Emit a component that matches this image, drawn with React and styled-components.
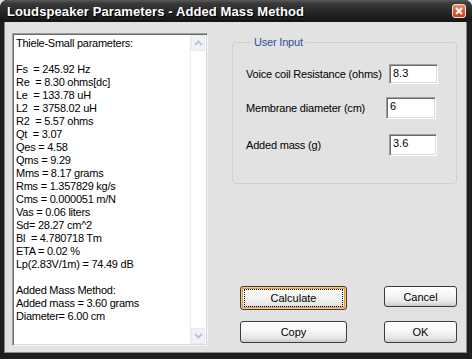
import React from "react";
import styled, { createGlobalStyle } from "styled-components";

const Global = createGlobalStyle`
  html, body { margin: 0; padding: 0; background: #e2e2e2; }
  body { width: 472px; height: 359px; overflow: hidden; font-family: "Liberation Sans", Arial, sans-serif; }
`;

const Window = styled.div`
  width: 472px;
  height: 359px;
  box-sizing: border-box;
  background: #1e1e1e;
  border-radius: 7px 7px 0 0;
  display: flex;
  flex-direction: column;
  overflow: hidden;
`;

const TitleBar = styled.div`
  height: 22px;
  flex: none;
  display: flex;
  align-items: center;
  justify-content: space-between;
  padding: 0 6px 0 7px;
  background: linear-gradient(#5a5a5a 0%, #3a3a3a 15%, #262626 55%, #151515 100%);
  border-radius: 7px 7px 0 0;
`;

const Title = styled.span`
  color: #fff;
  font-family: "Liberation Sans", Arial, sans-serif;
  font-weight: bold;
  font-size: 13px;
  letter-spacing: 0.1px;
  text-shadow: 1px 1px 0 #000;
  margin-top: 1px;
`;

const CloseBtn = styled.div`
  width: 14px;
  height: 14px;
  box-sizing: border-box;
  border: 1px solid #f5e6dc;
  border-radius: 3px;
  background: linear-gradient(#f08a64, #e0502c 60%, #c8401e);
  display: flex;
  align-items: center;
  justify-content: center;
`;

const Client = styled.div`
  flex: 1;
  margin: 0 5px 6px 4px;
  background: #e2e2e2;
  box-shadow: inset 1px 0 0 #8a8a8a, inset -1px 0 0 #8a8a8a, inset 0 -1px 0 #8a8a8a;
  display: flex;
  padding: 11px 0 0 8px;
`;

const ListBox = styled.div`
  width: 196px;
  height: 313px;
  box-sizing: border-box;
  background: #fff;
  border-top: 1px solid #a0a0a0;
  border-left: 1px solid #a0a0a0;
  border-right: 1px solid #f4f4f4;
  border-bottom: 1px solid #f4f4f4;
  box-shadow: inset 1px 1px 0 #6a6a6a, inset -1px -1px 0 #d8d8d8;
  display: flex;
  flex: none;
`;

const ListText = styled.pre`
  flex: 1;
  margin: 0;
  padding: 3px 0 0 3px;
  font-family: "Liberation Sans", Arial, sans-serif;
  font-size: 11px;
  letter-spacing: -0.25px;
  line-height: 13px;
  color: #000;
  white-space: pre;
  overflow: hidden;
`;

const ScrollBar = styled.div`
  width: 15px;
  margin: 1px 1px 1px 0;
  display: flex;
  flex-direction: column;
  justify-content: space-between;
  background: #fff;
  border-left: 1px solid #ececec;
`;

const ArrowBtn = styled.div`
  width: 14px;
  height: 16px;
  box-sizing: border-box;
  border: 1px solid #e6e9f0;
  border-radius: 2px;
  background: #f1f2f6;
  display: flex;
  align-items: center;
  justify-content: center;
`;

const RightCol = styled.div`
  margin-left: 24px;
  width: 225px;
  display: flex;
  flex-direction: column;
`;

const GroupBox = styled.fieldset`
  margin: 3px 0 0 0;
  padding: 12px 0 0 13px;
  height: 148px;
  border: 1px solid #cfcfcf;
  border-radius: 4px;
  min-width: 0;
  box-sizing: border-box;
`;

const Legend = styled.legend`
  padding: 0 2px;
  margin-left: 6px;
  color: #2f4f9e;
  font-size: 11px;
  letter-spacing: -0.2px;
`;

const Field = styled.div`
  display: flex;
  align-items: center;
  height: 22px;
  margin-top: ${(p) => p.$gap}px;
`;

const Label = styled.span`
  font-size: 11px;
  letter-spacing: -0.2px;
  color: #000;
  flex: 1;
`;

const Input = styled.div`
  width: ${(p) => p.$w}px;
  height: ${(p) => p.$h}px;
  margin-right: ${(p) => p.$mr}px;
  box-sizing: border-box;
  background: #fff;
  border-top: 1px solid #a0a0a0;
  border-left: 1px solid #a0a0a0;
  border-right: 1px solid #fff;
  border-bottom: 1px solid #fff;
  box-shadow: inset 1px 1px 0 #6a6a6a, inset -1px -1px 0 #dcdcdc;
  font-size: 11px;
  padding: 2px 0 0 3px;
  color: #000;
`;

const ButtonGrid = styled.div`
  margin-top: auto;
  margin-bottom: 10px;
  padding-left: 8px;
  display: grid;
  grid-template-columns: 107px 73px;
  column-gap: 37px;
  row-gap: 11px;
  align-items: start;
`;

const Button = styled.div`
  height: ${(p) => p.$h}px;
  box-sizing: border-box;
  border: 1px solid #3c3c3c;
  border-radius: 3px;
  background: linear-gradient(#ffffff 0%, #f6f6f6 45%, #e6e6e6 80%, #c9c9c9 100%);
  display: flex;
  align-items: center;
  justify-content: center;
  font-size: 11px;
  color: #000;
  box-shadow: ${(p) => (p.$default ? "inset 0 0 0 1px #f8c878, inset 0 0 0 2px #e89a3c" : "none")};
`;

const FocusText = styled.span`
  outline: 1px dotted #000;
  outline-offset: 0;
  padding: 2px 0;
  width: 97px;
  text-align: center;
  box-sizing: border-box;
`;

const text = `Thiele-Small parameters:

Fs  = 245.92 Hz
Re  = 8.30 ohms[dc]
Le  = 133.78 uH
L2  = 3758.02 uH
R2  = 5.57 ohms
Qt  = 3.07
Qes = 4.58
Qms = 9.29
Mms = 8.17 grams
Rms = 1.357829 kg/s
Cms = 0.000051 m/N
Vas = 0.06 liters
Sd= 28.27 cm^2
Bl  = 4.780718 Tm
ETA = 0.02 %
Lp(2.83V/1m) = 74.49 dB

Added Mass Method:
Added mass = 3.60 grams
Diameter= 6.00 cm`;

const Chevron = ({ up }) => (
  <svg width="9" height="6" viewBox="0 0 9 6">
    <path
      d={up ? "M1 5 L4.5 1.5 L8 5" : "M1 1 L4.5 4.5 L8 1"}
      fill="none"
      stroke="#b4c6e6"
      strokeWidth="2"
    />
  </svg>
);

export default function App() {
  return (
    <>
      <Global />
      <Window>
        <TitleBar>
          <Title>Loudspeaker Parameters - Added Mass Method</Title>
          <CloseBtn>
            <svg width="8" height="8" viewBox="0 0 8 8">
              <path d="M1 1 L7 7 M7 1 L1 7" stroke="#fff" strokeWidth="2" />
            </svg>
          </CloseBtn>
        </TitleBar>
        <Client>
          <ListBox>
            <ListText>{text}</ListText>
            <ScrollBar>
              <ArrowBtn>
                <Chevron up />
              </ArrowBtn>
              <ArrowBtn>
                <Chevron />
              </ArrowBtn>
            </ScrollBar>
          </ListBox>
          <RightCol>
            <GroupBox>
              <Legend>User Input</Legend>
              <Field $gap={3}>
                <Label>Voice coil Resistance (ohms)</Label>
                <Input $w={49} $h={20} $mr={18}>8.3</Input>
              </Field>
              <Field $gap={12}>
                <Label>Membrane diameter (cm)</Label>
                <Input $w={50} $h={22} $mr={20}>6</Input>
              </Field>
              <Field $gap={15}>
                <Label>Added mass (g)</Label>
                <Input $w={48} $h={22} $mr={19}>3.6</Input>
              </Field>
            </GroupBox>
            <ButtonGrid>
              <Button $h={24} $default>
                <FocusText>Calculate</FocusText>
              </Button>
              <Button $h={21}>Cancel</Button>
              <Button $h={22}>Copy</Button>
              <Button $h={22}>OK</Button>
            </ButtonGrid>
          </RightCol>
        </Client>
      </Window>
    </>
  );
}
